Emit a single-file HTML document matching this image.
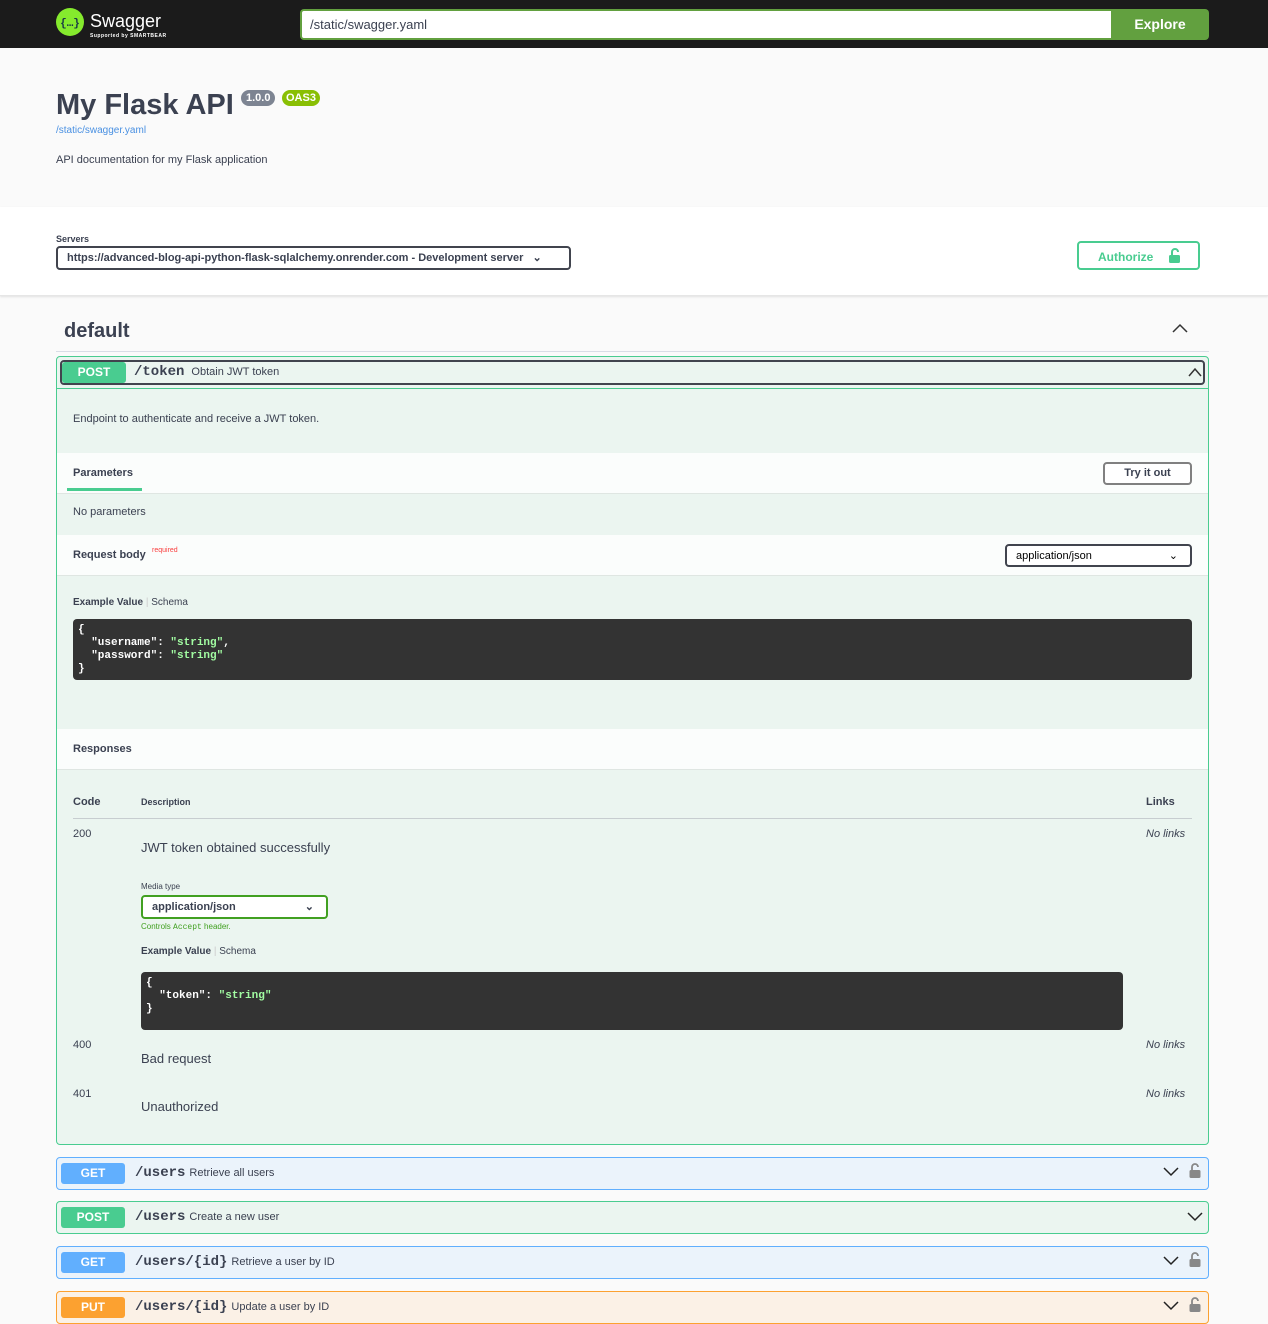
<!DOCTYPE html>
<html><head><meta charset="utf-8"><style>
*{box-sizing:border-box;margin:0;padding:0}
body{width:1268px;height:1320px;overflow:hidden;background:#fafafa;font-family:"Liberation Sans",sans-serif;color:#3b4151;position:relative}
.a{position:absolute}
.mono{font-family:"Liberation Mono",monospace}
.tag{display:inline-block;color:#fff;font-weight:bold;font-size:12px;text-align:center;border-radius:3px;width:64px;height:21px;line-height:21px}
.sum{position:absolute;left:56px;width:1153px;height:33px;border:1px solid;border-radius:4px}
.sum .tag{position:absolute;left:4px;top:5px}
.sum .p{position:absolute;left:78px;top:7px;font-size:14px;font-weight:bold;font-family:"Liberation Mono",monospace;color:#3b4151}
.sum .d{font-size:11px;font-weight:normal;font-family:"Liberation Sans",sans-serif;margin-left:4px}
.code{background:#333;border-radius:4px;color:#fff;font-family:"Liberation Mono",monospace;font-size:11px;font-weight:bold;line-height:13px;padding:5px 5px}
.code s{text-decoration:none;color:#a2fca2}
.sel{border:2px solid #41444e;border-radius:4px;font-size:12px;font-weight:bold;background:#fff;padding:0 9px;line-height:20px}
</style></head><body>
<div class="a" style="left:0;top:0;width:1268px;height:48px;background:#1b1b1b"></div>
<svg class="a" style="left:56px;top:8px" width="28" height="28"><circle cx="14" cy="14" r="14" fill="#85ea2d"/><text x="14" y="18" font-size="11" font-weight="bold" text-anchor="middle" fill="#173647" font-family="Liberation Mono">{…}</text></svg>
<div class="a" style="left:90px;top:11px;color:#fff;font-size:18px">Swagger</div>
<div class="a" style="left:90px;top:33px;color:#fff;font-size:5px;font-weight:bold;letter-spacing:.5px">Supported by SMARTBEAR</div>
<div class="a" style="left:300px;top:9px;width:812px;height:31px;background:#fff;border:2px solid #62a03f;border-right:none;border-radius:4px 0 0 4px;font-size:13px;padding:6px 8px;color:#3b4151">/static/swagger.yaml</div>
<div class="a" style="left:1111px;top:9px;width:98px;height:31px;background:#62a03f;border-radius:0 4px 4px 0;color:#fff;font-weight:bold;font-size:14px;text-align:center;line-height:31px">Explore</div>

<div class="a" style="left:56px;top:89px;font-size:29px;font-weight:bold;color:#3b4151">My Flask API</div>
<div class="a" style="left:241px;top:90px;background:#7d8492;color:#fff;font-size:11px;font-weight:bold;border-radius:57px;padding:2px 5px">1.0.0</div>
<div class="a" style="left:282px;top:90px;background:#89bf04;color:#fff;font-size:11px;font-weight:bold;border-radius:57px;padding:2px 4px">OAS3</div>
<div class="a" style="left:56px;top:125px;font-size:10px;color:#4990e2">/static/swagger.yaml</div>
<div class="a" style="left:56px;top:154px;font-size:11px">API documentation for my Flask application</div>

<div class="a" style="left:0;top:207px;width:1268px;height:89px;background:#fff;border-bottom:1px solid #e6e6e6;box-shadow:0 1px 2px rgba(0,0,0,.1)"></div>
<div class="a" style="left:56px;top:234px;font-size:9px;font-weight:bold">Servers</div>
<div class="a sel" style="left:56px;top:246px;width:515px;height:24px;font-size:11px">https://advanced-blog-api-python-flask-sqlalchemy.onrender.com - Development server <span style="margin-left:6px">⌄</span></div>
<div class="a" style="left:1077px;top:241px;width:123px;height:29px;border:2px solid #49cc90;border-radius:4px;color:#49cc90;font-weight:bold;font-size:12px;padding:7px 0 0 19px">Authorize</div>
<svg class="a" style="left:1168px;top:247px" width="14" height="16"><path d="M4 8V5a3 3 0 0 1 6 0" fill="none" stroke="#49cc90" stroke-width="2"/><rect x="1" y="8" width="11" height="8" rx="1.5" fill="#49cc90"/></svg>

<div class="a" style="left:64px;top:320px;font-size:20px;font-weight:bold">default</div>
<svg class="a" style="left:1172px;top:323px" width="16" height="12"><path d="M1 9l7-7 7 7" fill="none" stroke="#333" stroke-width="1.5"/></svg>
<div class="a" style="left:56px;top:351px;width:1153px;height:1px;background:#d8dde6"></div>

<div class="a" style="left:56px;top:356px;width:1153px;height:789px;background:#ebf5f0;border:1px solid #49cc90;border-radius:4px"></div>
<div class="a" style="left:60px;top:360px;width:1145px;height:25px;border:2px solid #41444e;border-radius:4px"></div>
<div class="a tag" style="left:62px;top:362px;background:#49cc90">POST</div>
<div class="a mono" style="left:134px;top:364px;font-size:14px;font-weight:bold">/token<span style="font-family:'Liberation Sans';font-size:11px;font-weight:normal;margin-left:7px">Obtain JWT token</span></div>
<svg class="a" style="left:1188px;top:367px" width="14" height="10"><path d="M1 9l6-7 6 7" fill="none" stroke="#333" stroke-width="1.5"/></svg>
<div class="a" style="left:57px;top:388px;width:1151px;height:1px;background:#49cc90"></div>
<div class="a" style="left:73px;top:413px;font-size:11px">Endpoint to authenticate and receive a JWT token.</div>

<div class="a" style="left:57px;top:453px;width:1151px;height:41px;background:rgba(255,255,255,.8);border-bottom:1px solid #dfe6e2"></div>
<div class="a" style="left:73px;top:467px;font-size:11px;font-weight:bold">Parameters</div>
<div class="a" style="left:67px;top:488px;width:75px;height:3px;background:#49cc90"></div>
<div class="a" style="left:1103px;top:462px;width:89px;height:23px;border:2px solid #808080;border-radius:4px;background:#fff;font-size:11px;font-weight:bold;text-align:center;line-height:19px">Try it out</div>
<div class="a" style="left:73px;top:506px;font-size:11px">No parameters</div>

<div class="a" style="left:57px;top:535px;width:1151px;height:41px;background:rgba(255,255,255,.8);border-bottom:1px solid #dfe6e2"></div>
<div class="a" style="left:73px;top:549px;font-size:11px;font-weight:bold">Request body</div>
<div class="a" style="left:152px;top:547px;font-size:7px;color:#f93e3e">required</div>
<div class="a sel" style="left:1005px;top:544px;width:187px;height:23px;font-size:11px;font-weight:normal;color:#000">application/json<span style="position:absolute;right:12px">⌄</span></div>
<div class="a" style="left:73px;top:597px;font-size:10px"><b>Example Value</b> <span style="color:#ccc">|</span> Schema</div>
<div class="a code" style="left:73px;top:619px;width:1119px;height:61px">{<br>&nbsp;&nbsp;"username": <s>"string"</s>,<br>&nbsp;&nbsp;"password": <s>"string"</s><br>}</div>

<div class="a" style="left:57px;top:729px;width:1151px;height:41px;background:rgba(255,255,255,.8);border-bottom:1px solid #dfe6e2"></div>
<div class="a" style="left:73px;top:743px;font-size:11px;font-weight:bold">Responses</div>
<div class="a" style="left:73px;top:796px;font-size:11px;font-weight:bold">Code</div>
<div class="a" style="left:141px;top:797px;font-size:9px;font-weight:bold">Description</div>
<div class="a" style="left:1146px;top:796px;font-size:11px;font-weight:bold">Links</div>
<div class="a" style="left:73px;top:818px;width:1119px;height:1px;background:#c7cdd0"></div>
<div class="a" style="left:73px;top:828px;font-size:11px">200</div>
<div class="a" style="left:141px;top:840px;font-size:13px">JWT token obtained successfully</div>
<div class="a" style="left:1146px;top:828px;font-size:11px;font-style:italic">No links</div>
<div class="a" style="left:141px;top:882px;font-size:8px">Media type</div>
<div class="a sel" style="left:141px;top:895px;width:187px;height:24px;border-color:#41a021;font-size:11px">application/json<span style="position:absolute;right:12px">⌄</span></div>
<div class="a" style="left:141px;top:922px;font-size:8px;color:#41a021">Controls <span class="mono">Accept</span> header.</div>
<div class="a" style="left:141px;top:946px;font-size:10px"><b>Example Value</b> <span style="color:#ccc">|</span> Schema</div>
<div class="a code" style="left:141px;top:972px;width:982px;height:58px">{<br>&nbsp;&nbsp;"token": <s>"string"</s><br>}</div>
<div class="a" style="left:73px;top:1039px;font-size:11px">400</div>
<div class="a" style="left:141px;top:1051px;font-size:13px">Bad request</div>
<div class="a" style="left:1146px;top:1039px;font-size:11px;font-style:italic">No links</div>
<div class="a" style="left:73px;top:1088px;font-size:11px">401</div>
<div class="a" style="left:141px;top:1099px;font-size:13px">Unauthorized</div>
<div class="a" style="left:1146px;top:1088px;font-size:11px;font-style:italic">No links</div>

<div class="sum" style="top:1157px;background:#ebf3fb;border-color:#61affe"><span class="tag" style="background:#61affe">GET</span><span class="p">/users<span class="d">Retrieve all users</span></span></div>
<div class="sum" style="top:1201px;background:#ebf5f0;border-color:#49cc90"><span class="tag" style="background:#49cc90">POST</span><span class="p">/users<span class="d">Create a new user</span></span></div>
<div class="sum" style="top:1246px;background:#ebf3fb;border-color:#61affe"><span class="tag" style="background:#61affe">GET</span><span class="p">/users/{id}<span class="d">Retrieve a user by ID</span></span></div>
<div class="sum" style="top:1291px;background:#fbf1e6;border-color:#fca130"><span class="tag" style="background:#fca130">PUT</span><span class="p">/users/{id}<span class="d">Update a user by ID</span></span></div>

<svg class="a" style="left:1163px;top:1167px" width="16" height="10"><path d="M1 1l7 7 7-7" fill="none" stroke="#222" stroke-width="1.5"/></svg>
<svg class="a" style="left:1187px;top:1212px" width="16" height="10"><path d="M1 1l7 7 7-7" fill="none" stroke="#222" stroke-width="1.5"/></svg>
<svg class="a" style="left:1163px;top:1256px" width="16" height="10"><path d="M1 1l7 7 7-7" fill="none" stroke="#222" stroke-width="1.5"/></svg>
<svg class="a" style="left:1163px;top:1301px" width="16" height="10"><path d="M1 1l7 7 7-7" fill="none" stroke="#222" stroke-width="1.5"/></svg>
<svg class="a" style="left:1189px;top:1163px" width="12" height="15"><path d="M3 7V4a3 3 0 0 1 6 0" fill="none" stroke="#888" stroke-width="1.8"/><rect x="0.5" y="7" width="11" height="8" rx="1.5" fill="#888"/></svg>
<svg class="a" style="left:1189px;top:1252px" width="12" height="15"><path d="M3 7V4a3 3 0 0 1 6 0" fill="none" stroke="#888" stroke-width="1.8"/><rect x="0.5" y="7" width="11" height="8" rx="1.5" fill="#888"/></svg>
<svg class="a" style="left:1189px;top:1297px" width="12" height="15"><path d="M3 7V4a3 3 0 0 1 6 0" fill="none" stroke="#888" stroke-width="1.8"/><rect x="0.5" y="7" width="11" height="8" rx="1.5" fill="#888"/></svg>
</body></html>
